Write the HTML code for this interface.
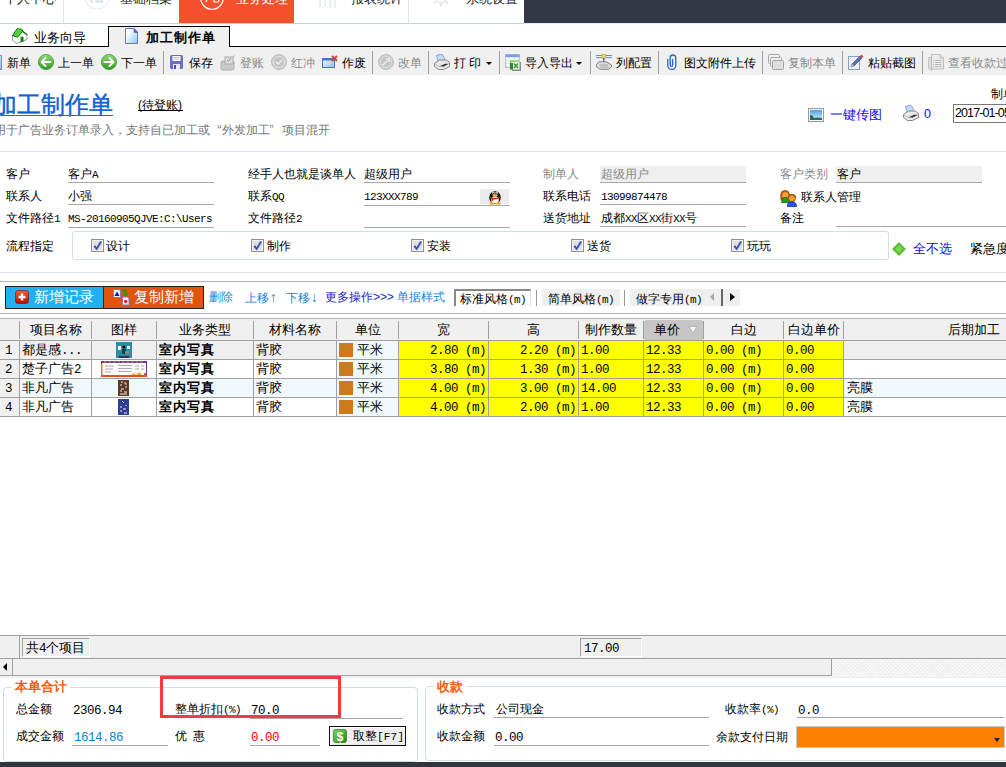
<!DOCTYPE html>
<html><head><meta charset="utf-8">
<style>
*{margin:0;padding:0;box-sizing:border-box}
html,body{width:1006px;height:767px;overflow:hidden;background:#fff;font-family:"Liberation Sans",sans-serif;font-size:12px;color:#000}
.a{position:absolute;white-space:nowrap;line-height:1}
.m{font-family:"Liberation Mono",monospace;font-size:11px!important;letter-spacing:-0.6px}
.hl{position:absolute;height:1px}
.g{font-family:"Liberation Mono",monospace;font-size:12.5px;letter-spacing:-0.5px}
.vl{position:absolute;width:1px}
</style></head><body>
<!-- top nav -->
<div class="a" style="left:0;top:0;width:1006px;height:23px;background:#fff"></div>
<div class="a" style="left:179px;top:0;width:115px;height:23px;background:#f5502c"></div>
<div class="a" style="left:524px;top:0;width:482px;height:23px;background:#343a45"></div>
<div class="hl" style="left:0;top:23px;width:524px;background:#c3d2dc"></div><div class="hl" style="left:524px;top:23px;width:482px;background:#e2ecf3"></div>
<div class="vl" style="left:63px;top:0;height:23px;background:#e3e3e3"></div>
<div class="vl" style="left:408px;top:0;height:23px;background:#e3e3e3"></div>
<div class="a" style="left:4px;top:-7px;font-size:12.5px;color:#222">个人中心</div>
<svg class="a" style="left:84px;top:-16px" width="26" height="26" viewBox="0 0 26 26"><circle cx="13" cy="13" r="12" fill="none" stroke="#ebebeb" stroke-width="1"/><rect x="6" y="16" width="3" height="3" fill="#e3e8ec"/><rect x="11" y="16" width="8" height="3" fill="#e3e8ec"/></svg>
<div class="a" style="left:120px;top:-7px;font-size:12.5px;color:#222">基础档案</div>
<svg class="a" style="left:199px;top:-15px" width="26" height="26" viewBox="0 0 26 26"><circle cx="13" cy="13" r="11.3" fill="none" stroke="#fff" stroke-width="1.3"/><path d="M7 17 l2 -5 M15 12 v5 h3 a2 2 0 0 0 0 -4" fill="none" stroke="#fff" stroke-width="1.2"/></svg>
<div class="a" style="left:236px;top:-7px;font-size:12.5px;color:#fff">业务处理</div>
<svg class="a" style="left:316px;top:-8px" width="22" height="17" viewBox="0 0 22 17"><path d="M4 0v15M9 0v15M14 0v15M19 0v15" stroke="#e8ecef" stroke-width="1.6"/><path d="M1 15.5h20" stroke="#eef0f2" stroke-width="1" stroke-dasharray="1 1"/></svg>
<div class="a" style="left:351px;top:-7px;font-size:12.5px;color:#222">报表统计</div>
<svg class="a" style="left:433px;top:-9px" width="16" height="16" viewBox="0 0 16 16"><circle cx="8" cy="7" r="5" fill="none" stroke="#e6eaec" stroke-width="2"/><path d="M8 12v3.5M3 11l-2 2M13 11l2 2" stroke="#e6eaec" stroke-width="2"/></svg>
<div class="a" style="left:466px;top:-7px;font-size:12.5px;color:#222">系统设置</div>

<!-- tab row -->
<div class="hl" style="left:0;top:46px;width:1006px;background:#000"></div>
<div class="a" style="left:108px;top:26px;width:122px;height:21px;border:1px solid #000;border-bottom:none;background:#f0f0f0"></div>
<div class="a" style="left:34px;top:31px;font-size:13px">业务向导</div>
<div class="a" style="left:146px;top:31px;font-size:13px;font-weight:bold;letter-spacing:1px">加工制作单</div>

<!-- toolbar -->
<div class="a" style="left:0;top:47px;width:1006px;height:28px;background:#f0f0f0"></div>
<div class="a" style="left:7px;top:57px">新单</div>
<div class="a" style="left:58px;top:57px">上一单</div>
<div class="a" style="left:121px;top:57px">下一单</div>
<div class="a" style="left:189px;top:57px">保存</div>
<div class="a" style="left:240px;top:57px;color:#888">登账</div>
<div class="a" style="left:291px;top:57px;color:#888">红冲</div>
<div class="a" style="left:342px;top:57px">作废</div>
<div class="a" style="left:398px;top:57px;color:#888">改单</div>
<div class="a" style="left:454px;top:57px">打 印</div>
<div class="a" style="left:525px;top:57px">导入导出</div>
<div class="a" style="left:616px;top:57px">列配置</div>
<div class="a" style="left:684px;top:57px">图文附件上传</div>
<div class="a" style="left:788px;top:57px;color:#888">复制本单</div>
<div class="a" style="left:868px;top:57px">粘贴截图</div>
<div class="a" style="left:948px;top:57px;color:#888">查看收款过</div>
<div class="vl" style="left:163px;top:51px;height:23px;background:#a0a0a0"></div>
<div class="vl" style="left:372px;top:51px;height:23px;background:#a0a0a0"></div>
<div class="vl" style="left:428px;top:51px;height:23px;background:#a0a0a0"></div>
<div class="vl" style="left:499px;top:51px;height:23px;background:#a0a0a0"></div>
<div class="vl" style="left:590px;top:51px;height:23px;background:#a0a0a0"></div>
<div class="vl" style="left:658px;top:51px;height:23px;background:#a0a0a0"></div>
<div class="vl" style="left:762px;top:51px;height:23px;background:#a0a0a0"></div>
<div class="vl" style="left:842px;top:51px;height:23px;background:#a0a0a0"></div>
<div class="vl" style="left:922px;top:51px;height:23px;background:#a0a0a0"></div>

<!-- title -->
<div class="a" style="left:-7px;top:93px;font-size:24px;color:#0f62d2;-webkit-text-stroke:0.4px #0f62d2">加工制作单</div><div class="hl" style="left:0;top:115px;width:113px;background:#1a6fd6"></div>
<div class="a" style="left:138px;top:99px;font-size:12px">(待登账)</div><div class="hl" style="left:138px;top:110px;width:45px;background:#000"></div>
<div class="a" style="left:-6.5px;top:124px;font-size:12px;color:#777">用于广告业务订单录入，支持自已加工或<span style="display:inline-block;width:12px;text-align:right">“</span>外发加工<span style="display:inline-block;width:12px">”</span>项目混开</div>
<div class="a" style="left:830px;top:108px;font-size:13px;color:#0b0bf5">一键传图</div>
<div class="a" style="left:924px;top:108px;font-size:12.5px;color:#0b0bf5">0</div>
<div class="a" style="left:991px;top:88px;font-size:12px">制单</div>
<div class="a" style="left:953px;top:104px;width:60px;height:19px;border:1px solid #7a7a7a;background:#fff"></div>
<div class="a" style="left:955px;top:107px;font-size:12.5px;letter-spacing:-0.9px">2017-01-05</div>


<!-- form -->
<div class="hl" style="left:0;top:151px;width:1006px;background:#dbe3ea"></div>
<div class="a" style="left:6px;top:168px">客户</div>
<div class="a" style="left:68px;top:168px">客户<span class="m" style="font-size:10px">A</span></div>
<div class="hl" style="left:68px;top:182px;width:146px;background:#a8a8a8"></div>
<div class="a" style="left:6px;top:190px">联系人</div>
<div class="a" style="left:68px;top:190px">小强</div>
<div class="hl" style="left:68px;top:204px;width:146px;background:#a8a8a8"></div>
<div class="a" style="left:6px;top:212px">文件路径<span class="m" style="font-size:10px">1</span></div>
<div class="a m" style="left:68px;top:214px;font-size:10px">MS-20160905QJVE:C:\Users</div>
<div class="hl" style="left:68px;top:227px;width:146px;background:#a8a8a8"></div>

<div class="a" style="left:248px;top:168px">经手人也就是谈单人</div>
<div class="a" style="left:364px;top:168px">超级用户</div>
<div class="hl" style="left:364px;top:182px;width:146px;background:#a8a8a8"></div>
<div class="a" style="left:248px;top:190px">联系<span class="m" style="font-size:10px">QQ</span></div>
<div class="a m" style="left:364px;top:192px;font-size:10px">123XXX789</div>
<div class="a" style="left:480px;top:189px;width:29px;height:15px;background:#ececec"></div>
<div class="hl" style="left:364px;top:205px;width:146px;background:#a8a8a8"></div>
<div class="a" style="left:248px;top:212px">文件路径<span class="m" style="font-size:10px">2</span></div>
<div class="hl" style="left:364px;top:227px;width:146px;background:#a8a8a8"></div>

<div class="a" style="left:543px;top:168px;color:#888">制单人</div>
<div class="a" style="left:600px;top:166px;width:146px;height:16px;background:#efefef"></div>
<div class="a" style="left:601px;top:168px;color:#888">超级用户</div>
<div class="hl" style="left:600px;top:182px;width:146px;background:#a8a8a8"></div>
<div class="a" style="left:543px;top:190px">联系电话</div>
<div class="a m" style="left:601px;top:192px;font-size:10px">13099874478</div>
<div class="hl" style="left:600px;top:204px;width:146px;background:#a8a8a8"></div>
<div class="a" style="left:543px;top:212px">送货地址</div>
<div class="a" style="left:601px;top:212px">成都<span class="m" style="font-size:10px">XX</span>区<span class="m" style="font-size:10px">XX</span>街<span class="m" style="font-size:10px">XX</span>号</div>
<div class="hl" style="left:600px;top:226px;width:146px;background:#a8a8a8"></div>

<div class="a" style="left:780px;top:168px;color:#888">客户类别</div>
<div class="a" style="left:836px;top:166px;width:146px;height:16px;background:#efefef"></div>
<div class="a" style="left:837px;top:168px">客户</div>
<div class="hl" style="left:836px;top:182px;width:146px;background:#a8a8a8"></div>
<div class="a" style="left:801px;top:191px">联系人管理</div>
<div class="a" style="left:780px;top:212px">备注</div>
<div class="hl" style="left:836px;top:226px;width:170px;background:#a8a8a8"></div>

<!-- flow -->
<div class="a" style="left:6px;top:240px">流程指定</div>
<div class="a" style="left:72px;top:231px;width:817px;height:29px;border:1px solid #d4dee6;border-radius:3px"></div>
<div class="a" style="left:106px;top:240px">设计</div>
<div class="a" style="left:267px;top:240px">制作</div>
<div class="a" style="left:427px;top:240px">安装</div>
<div class="a" style="left:587px;top:240px">送货</div>
<div class="a" style="left:747px;top:240px">玩玩</div>
<div class="a" style="left:913px;top:242px;font-size:13px;color:#0c0cff">全不选</div>
<div class="a" style="left:970px;top:242px;font-size:13px">紧急度</div>
<div class="hl" style="left:0;top:272px;width:1006px;background:#dbe3ea"></div>

<!-- buttons row -->
<div class="hl" style="left:0;top:281px;width:1006px;background:#b4b4b4"></div>
<div class="a" style="left:5px;top:286px;width:199px;height:23px;border:1px solid #222;background:#e0540e"></div>
<div class="a" style="left:6px;top:287px;width:97px;height:21px;background:#1fb1f2"></div>
<div class="a" style="left:103px;top:287px;width:1px;height:21px;background:#222"></div>
<div class="a" style="left:34px;top:289px;font-size:15px;color:#fff">新增记录</div>
<div class="a" style="left:134px;top:289px;font-size:15px;color:#fff">复制新增</div>
<div class="a" style="left:209px;top:291px;font-size:12px;color:#1a84d6">删除</div>
<div class="a" style="left:245px;top:291px;font-size:12px;color:#1a84d6">上移<span style="font-size:14px;font-family:'Liberation Mono'">↑</span></div>
<div class="a" style="left:286px;top:291px;font-size:12px;color:#1a84d6">下移<span style="font-size:14px;font-family:'Liberation Mono'">↓</span></div>
<div class="a" style="left:325px;top:291px;font-size:12px;color:#2323c8">更多操作<span style="font-family:'Liberation Mono';font-size:12px;letter-spacing:-0.3px">&gt;&gt;&gt;</span></div>
<div class="a" style="left:397px;top:291px;font-size:12px;color:#1a84d6">单据样式</div>
<div class="a" style="left:454px;top:289px;width:77px;height:17px;background:#fff;border-left:2px solid #888;border-top:2px solid #888;border-right:1px solid #ddd"></div>
<div class="a" style="left:460px;top:293px">标准风格<span class="m" style="font-size:10px">(m)</span></div>
<div class="vl" style="left:536px;top:290px;height:16px;background:#999"></div>
<div class="a" style="left:542px;top:289px;width:78px;height:17px;background:#efefef"></div>
<div class="a" style="left:548px;top:293px">简单风格<span class="m" style="font-size:10px">(m)</span></div>
<div class="vl" style="left:624px;top:290px;height:16px;background:#999"></div>
<div class="a" style="left:630px;top:289px;width:110px;height:17px;background:#efefef"></div>
<div class="a" style="left:636px;top:293px">做字专用<span class="m" style="font-size:10px">(m)</span></div>
<div class="hl" style="left:0;top:313px;width:1006px;background:#b4b4b4"></div>
<div class="hl" style="left:0;top:318px;width:1006px;background:#b4b4b4"></div>
<div class="a" style="left:0;top:319px;width:1006px;height:21px;background:#f0f0f0"></div>
<div class="a" style="left:644px;top:320px;width:59px;height:20px;background:#c6c6c6;border-radius:2px 2px 0 0"></div>
<div class="vl" style="left:19px;top:321px;height:18px;background:#a0a0a0"></div>
<div class="vl" style="left:91px;top:321px;height:18px;background:#a0a0a0"></div>
<div class="vl" style="left:156px;top:321px;height:18px;background:#a0a0a0"></div>
<div class="vl" style="left:253px;top:321px;height:18px;background:#a0a0a0"></div>
<div class="vl" style="left:336px;top:321px;height:18px;background:#a0a0a0"></div>
<div class="vl" style="left:398px;top:321px;height:18px;background:#a0a0a0"></div>
<div class="vl" style="left:488px;top:321px;height:18px;background:#a0a0a0"></div>
<div class="vl" style="left:578px;top:321px;height:18px;background:#a0a0a0"></div>
<div class="vl" style="left:643px;top:321px;height:18px;background:#a0a0a0"></div>
<div class="vl" style="left:703px;top:321px;height:18px;background:#a0a0a0"></div>
<div class="vl" style="left:783px;top:321px;height:18px;background:#a0a0a0"></div>
<div class="vl" style="left:843px;top:321px;height:18px;background:#a0a0a0"></div>
<div class="a" style="left:20px;top:323px;width:71px;text-align:center;font-size:13px">项目名称</div>
<div class="a" style="left:92px;top:323px;width:64px;text-align:center;font-size:13px">图样</div>
<div class="a" style="left:157px;top:323px;width:96px;text-align:center;font-size:13px">业务类型</div>
<div class="a" style="left:254px;top:323px;width:82px;text-align:center;font-size:13px">材料名称</div>
<div class="a" style="left:337px;top:323px;width:61px;text-align:center;font-size:13px">单位</div>
<div class="a" style="left:399px;top:323px;width:89px;text-align:center;font-size:13px">宽</div>
<div class="a" style="left:489px;top:323px;width:89px;text-align:center;font-size:13px">高</div>
<div class="a" style="left:579px;top:323px;width:64px;text-align:center;font-size:13px">制作数量</div>
<div class="a" style="left:654px;top:323px;font-size:13px">单价</div>
<svg class="a" style="left:688px;top:325px" width="10" height="9" viewBox="0 0 10 9"><path d="M1 1.5 H9 L5 8Z" fill="#f4f4f4" stroke="#a8a8a8" stroke-width="0.8"/></svg>
<div class="a" style="left:704px;top:323px;width:79px;text-align:center;font-size:13px">白边</div>
<div class="a" style="left:784px;top:323px;width:59px;text-align:center;font-size:13px">白边单价</div>
<div class="a" style="left:943px;top:323px;width:57px;text-align:right;font-size:13px">后期加工</div>
<div class="hl" style="left:0;top:340px;width:1006px;background:#a0a0a0"></div>
<div class="a" style="left:0;top:341px;width:19px;height:18px;background:#f0f0f0"></div>
<div class="a" style="left:20px;top:341px;width:378px;height:18px;background:#efefef"></div>
<div class="a" style="left:337px;top:341px;width:61px;height:18px;background:#f0f8fc"></div>
<div class="a" style="left:399px;top:341px;width:444px;height:18px;background:#ffff00"></div>
<div class="a" style="left:844px;top:341px;width:162px;height:18px;background:#efefef"></div>
<div class="a g" style="left:5px;top:345px">1</div>
<div class="a" style="left:22px;top:343px;font-size:13px">都是感<span class="g">...</span></div>
<div class="a" style="left:159px;top:343px;font-size:13px;font-weight:bold;letter-spacing:1px">室内写真</div>
<div class="a" style="left:256px;top:343px;font-size:13px">背胶</div>
<div class="a" style="left:339px;top:343px;width:14px;height:14px;background:#cd7a1f"></div>
<div class="a" style="left:357px;top:343px;font-size:13px">平米</div>
<div class="a g" style="left:399px;top:345px;width:87px;text-align:right">2.80 (m)</div>
<div class="a g" style="left:489px;top:345px;width:87px;text-align:right">2.20 (m)</div>
<div class="a g" style="left:581px;top:345px">1.00</div>
<div class="a g" style="left:646px;top:345px">12.33</div>
<div class="a g" style="left:706px;top:345px">0.00 (m)</div>
<div class="a g" style="left:786px;top:345px">0.00</div>
<div class="hl" style="left:0;top:359px;width:1006px;background:#a0a0a0"></div>
<div class="a" style="left:0;top:360px;width:19px;height:18px;background:#f0f0f0"></div>
<div class="a" style="left:20px;top:360px;width:378px;height:18px;background:#fff"></div>
<div class="a" style="left:337px;top:360px;width:61px;height:18px;background:#f0f8fc"></div>
<div class="a" style="left:399px;top:360px;width:444px;height:18px;background:#ffff00"></div>
<div class="a" style="left:844px;top:360px;width:162px;height:18px;background:#fff"></div>
<div class="a g" style="left:5px;top:364px">2</div>
<div class="a" style="left:22px;top:362px;font-size:13px">楚子广告<span class="g">2</span></div>
<div class="a" style="left:159px;top:362px;font-size:13px;font-weight:bold;letter-spacing:1px">室内写真</div>
<div class="a" style="left:256px;top:362px;font-size:13px">背胶</div>
<div class="a" style="left:339px;top:362px;width:14px;height:14px;background:#cd7a1f"></div>
<div class="a" style="left:357px;top:362px;font-size:13px">平米</div>
<div class="a g" style="left:399px;top:364px;width:87px;text-align:right">3.80 (m)</div>
<div class="a g" style="left:489px;top:364px;width:87px;text-align:right">1.30 (m)</div>
<div class="a g" style="left:581px;top:364px">1.00</div>
<div class="a g" style="left:646px;top:364px">12.33</div>
<div class="a g" style="left:706px;top:364px">0.00 (m)</div>
<div class="a g" style="left:786px;top:364px">0.00</div>
<div class="hl" style="left:0;top:378px;width:1006px;background:#a0a0a0"></div>
<div class="a" style="left:0;top:379px;width:19px;height:18px;background:#f0f0f0"></div>
<div class="a" style="left:20px;top:379px;width:378px;height:18px;background:#f0f8fc"></div>
<div class="a" style="left:337px;top:379px;width:61px;height:18px;background:#f0f8fc"></div>
<div class="a" style="left:399px;top:379px;width:444px;height:18px;background:#ffff00"></div>
<div class="a" style="left:844px;top:379px;width:162px;height:18px;background:#f0f8fc"></div>
<div class="a g" style="left:5px;top:383px">3</div>
<div class="a" style="left:22px;top:381px;font-size:13px">非凡广告</div>
<div class="a" style="left:159px;top:381px;font-size:13px;font-weight:bold;letter-spacing:1px">室内写真</div>
<div class="a" style="left:256px;top:381px;font-size:13px">背胶</div>
<div class="a" style="left:339px;top:381px;width:14px;height:14px;background:#cd7a1f"></div>
<div class="a" style="left:357px;top:381px;font-size:13px">平米</div>
<div class="a g" style="left:399px;top:383px;width:87px;text-align:right">4.00 (m)</div>
<div class="a g" style="left:489px;top:383px;width:87px;text-align:right">3.00 (m)</div>
<div class="a g" style="left:581px;top:383px">14.00</div>
<div class="a g" style="left:646px;top:383px">12.33</div>
<div class="a g" style="left:706px;top:383px">0.00 (m)</div>
<div class="a g" style="left:786px;top:383px">0.00</div>
<div class="a" style="left:847px;top:381px;font-size:13px">亮膜</div>
<div class="hl" style="left:0;top:397px;width:1006px;background:#a0a0a0"></div>
<div class="a" style="left:0;top:398px;width:19px;height:18px;background:#f0f0f0"></div>
<div class="a" style="left:20px;top:398px;width:378px;height:18px;background:#fff"></div>
<div class="a" style="left:337px;top:398px;width:61px;height:18px;background:#f0f8fc"></div>
<div class="a" style="left:399px;top:398px;width:444px;height:18px;background:#ffff00"></div>
<div class="a" style="left:844px;top:398px;width:162px;height:18px;background:#fff"></div>
<div class="a g" style="left:5px;top:402px">4</div>
<div class="a" style="left:22px;top:400px;font-size:13px">非凡广告</div>
<div class="a" style="left:159px;top:400px;font-size:13px;font-weight:bold;letter-spacing:1px">室内写真</div>
<div class="a" style="left:256px;top:400px;font-size:13px">背胶</div>
<div class="a" style="left:339px;top:400px;width:14px;height:14px;background:#cd7a1f"></div>
<div class="a" style="left:357px;top:400px;font-size:13px">平米</div>
<div class="a g" style="left:399px;top:402px;width:87px;text-align:right">4.00 (m)</div>
<div class="a g" style="left:489px;top:402px;width:87px;text-align:right">2.00 (m)</div>
<div class="a g" style="left:581px;top:402px">1.00</div>
<div class="a g" style="left:646px;top:402px">12.33</div>
<div class="a g" style="left:706px;top:402px">0.00 (m)</div>
<div class="a g" style="left:786px;top:402px">0.00</div>
<div class="a" style="left:847px;top:400px;font-size:13px">亮膜</div>
<div class="hl" style="left:0;top:416px;width:1006px;background:#a0a0a0"></div>
<div class="vl" style="left:19px;top:341px;height:75px;background:#a0a0a0"></div>
<div class="vl" style="left:91px;top:341px;height:75px;background:#a0a0a0"></div>
<div class="vl" style="left:156px;top:341px;height:75px;background:#a0a0a0"></div>
<div class="vl" style="left:253px;top:341px;height:75px;background:#a0a0a0"></div>
<div class="vl" style="left:336px;top:341px;height:75px;background:#a0a0a0"></div>
<div class="vl" style="left:398px;top:341px;height:75px;background:#a0a0a0"></div>
<div class="vl" style="left:488px;top:341px;height:75px;background:#a0a0a0"></div>
<div class="vl" style="left:578px;top:341px;height:75px;background:#a0a0a0"></div>
<div class="vl" style="left:643px;top:341px;height:75px;background:#a0a0a0"></div>
<div class="vl" style="left:703px;top:341px;height:75px;background:#a0a0a0"></div>
<div class="vl" style="left:783px;top:341px;height:75px;background:#a0a0a0"></div>
<div class="vl" style="left:843px;top:341px;height:75px;background:#a0a0a0"></div>
<div class="hl" style="left:0;top:635px;width:1006px;background:#a0a0a0"></div>
<div class="a" style="left:0;top:636px;width:1006px;height:23px;background:#f0f0f0"></div>
<div class="vl" style="left:19px;top:636px;height:23px;background:#a0a0a0"></div>
<div class="a" style="left:22px;top:638px;width:68px;height:19px;border:1px solid #a0a0a0;border-right-color:#fff;border-bottom-color:#fff;background:#f0f0f0"></div>
<div class="a" style="left:26px;top:641px;font-size:13px">共<span class="g">4</span>个项目</div>
<div class="a" style="left:580px;top:638px;width:62px;height:19px;border:1px solid #a0a0a0;border-right-color:#fff;border-bottom-color:#fff;background:#f0f0f0"></div>
<div class="a g" style="left:584px;top:643px">17.00</div>
<div class="hl" style="left:0;top:658px;width:1006px;background:#a0a0a0"></div>
<div class="a" style="left:0;top:659px;width:1006px;height:18px;background:#f8f8f8;background-image:repeating-linear-gradient(45deg,#f0f0f0 0 1px,transparent 1px 3px),repeating-linear-gradient(-45deg,#f0f0f0 0 1px,transparent 1px 3px)"></div>
<div class="a" style="left:12px;top:659px;width:820px;height:16px;background:#f0f0f0;border-right:1px solid #a0a0a0"></div>
<div class="a" style="left:0;top:659px;width:12px;height:16px;background:#f0f0f0"></div><div class="vl" style="left:12px;top:659px;height:16px;background:#a0a0a0"></div><div class="hl" style="left:0;top:677px;width:1006px;background:#ececec"></div>
<div class="a" style="left:3px;top:663px;width:0;height:0;border-top:4px solid transparent;border-bottom:4px solid transparent;border-right:4px solid #000"></div>
<div class="hl" style="left:0;top:675px;width:832px;background:#a0a0a0"></div>

<!-- bottom panel -->
<div class="a" style="left:3px;top:687px;width:415px;height:75px;border:1px solid #d3dde5;border-radius:4px"></div>
<div class="a" style="left:12px;top:681px;width:58px;height:12px;background:#fff"></div>
<div class="a" style="left:15px;top:680.5px;font-size:12.8px;font-weight:bold;color:#fa5a0c">本单合计</div>
<div class="a" style="left:16px;top:703px">总金额</div>
<div class="a g" style="left:73px;top:705px">2306.94</div>
<div class="a" style="left:16px;top:730px">成交金额</div>
<div class="a g" style="left:74px;top:732px;color:#1580d0">1614.86</div>
<div class="hl" style="left:72px;top:745px;width:96px;background:#a8a8a8"></div>
<div class="a" style="left:175px;top:703px">整单折扣<span class="m" style="font-size:10px">(%)</span></div>
<div class="a g" style="left:251px;top:705px">70.0</div>
<div class="hl" style="left:250px;top:718px;width:153px;background:#a8a8a8"></div>
<div class="a" style="left:175px;top:730px">优<span style="display:inline-block;width:6px"></span>惠</div>
<div class="a g" style="left:251px;top:732px;color:#f00">0.00</div>
<div class="hl" style="left:250px;top:745px;width:70px;background:#a8a8a8"></div>
<div class="a" style="left:329px;top:726px;width:77px;height:20px;border:1px solid #111;background:#efefef;box-shadow:inset 1px 1px 0 #fff"></div>
<div class="a" style="left:353px;top:730px">取整<span style="font-family:'Liberation Mono';font-size:11px;letter-spacing:0.2px">[F7]</span></div>

<div class="a" style="left:425px;top:686px;width:600px;height:75px;border:1px solid #d3dde5;border-radius:4px"></div>
<div class="a" style="left:434px;top:681px;width:32px;height:12px;background:#fff"></div>
<div class="a" style="left:437px;top:680.5px;font-size:12.8px;font-weight:bold;color:#fa5a0c">收款</div>
<div class="a" style="left:437px;top:703px">收款方式</div>
<div class="a" style="left:496px;top:703px">公司现金</div>
<div class="hl" style="left:494px;top:717px;width:215px;background:#a8a8a8"></div>
<div class="a" style="left:437px;top:730px">收款金额</div>
<div class="a g" style="left:495px;top:732px">0.00</div>
<div class="hl" style="left:494px;top:745px;width:215px;background:#a8a8a8"></div>
<div class="a" style="left:725px;top:703px">收款率<span class="m" style="font-size:10px">(%)</span></div>
<div class="a g" style="left:798px;top:705px">0.0</div>
<div class="hl" style="left:797px;top:717px;width:207px;background:#a8a8a8"></div>
<div class="a" style="left:716px;top:731px">余款支付日期</div>
<div class="a" style="left:796px;top:726px;width:209px;height:22px;border:1px solid #c8c8c8;background:#ff8000"></div>
<div class="a" style="left:994px;top:738px;width:0;height:0;border-left:3px solid transparent;border-right:3px solid transparent;border-top:4px solid #222"></div>

<div class="a" style="left:160px;top:676px;width:181px;height:42px;border:3px solid #f23b3d"></div>
<div class="a" style="left:0;top:762px;width:1006px;height:5px;background:#2f3640"></div>
<svg width="0" height="0" style="position:absolute"><defs>
<linearGradient id="gG" x1="0" y1="0" x2="0" y2="1"><stop offset="0" stop-color="#8fdc6a"/><stop offset="1" stop-color="#2f9a2a"/></linearGradient>
<linearGradient id="gDoc" x1="0" y1="0" x2="1" y2="1"><stop offset="0" stop-color="#ffffff"/><stop offset="1" stop-color="#8ab8ea"/></linearGradient>
<linearGradient id="gGray" x1="0" y1="0" x2="0" y2="1"><stop offset="0" stop-color="#e4e4e4"/><stop offset="1" stop-color="#b4b4b4"/></linearGradient>
<linearGradient id="gRed" x1="0" y1="0" x2="0" y2="1"><stop offset="0" stop-color="#ff5a3a"/><stop offset="1" stop-color="#b80e00"/></linearGradient>
</defs></svg>
<svg class="a" style="left:-11px;top:55px" width="14" height="15" viewBox="0 0 14 15"><rect x="0.5" y="0.5" width="12" height="14" fill="url(#gDoc)" stroke="#7a8fc8"/></svg>
<svg class="a" style="left:38px;top:54px" width="16" height="16" viewBox="0 0 16 16"><circle cx="8" cy="8" r="7.6" fill="url(#gG)" stroke="#3c9a34" stroke-width="0.8"/><path d="M3.5 8 L7.5 4 M3.5 8 L7.5 12 M3.5 8 H12.5" stroke="#fff" stroke-width="2" fill="none" stroke-linecap="round"/></svg>
<svg class="a" style="left:101px;top:54px" width="16" height="16" viewBox="0 0 16 16"><circle cx="8" cy="8" r="7.6" fill="url(#gG)" stroke="#3c9a34" stroke-width="0.8"/><path d="M12.5 8 L8.5 4 M12.5 8 L8.5 12 M12.5 8 H3.5" stroke="#fff" stroke-width="2" fill="none" stroke-linecap="round"/></svg>
<svg class="a" style="left:170px;top:55px" width="13" height="14" viewBox="0 0 13 14"><rect x="0" y="0" width="13" height="14" rx="1.5" fill="#6b6fc4"/><rect x="2.5" y="1" width="8" height="5" fill="#fff"/><path d="M3.5 2.5h6M3.5 4h6" stroke="#bbb" stroke-width="0.8"/><rect x="3" y="9" width="7" height="5" fill="#e8e8f0"/><rect x="4" y="10" width="2" height="4" fill="#4a4fa8"/></svg>
<svg class="a" style="left:220px;top:55px" width="16" height="16" viewBox="0 0 16 16"><rect x="1" y="6" width="13" height="9" rx="1.5" fill="#c8c8c8" stroke="#b0b0b0"/><rect x="5" y="2" width="8" height="7" fill="#ddd" stroke="#aaa"/><path d="M7 5l1.5 1.5L11 3" stroke="#999" fill="none"/><path d="M13 2 l2 -1.5" stroke="#aaa"/></svg>
<svg class="a" style="left:271px;top:54px" width="16" height="16" viewBox="0 0 16 16"><circle cx="8" cy="8" r="7.5" fill="#cfcfcf" stroke="#bdbdbd"/><circle cx="8" cy="8" r="5.5" fill="#c4c4c4" stroke="#e6e6e6" stroke-width="0.8"/><path d="M5 8l2 2 4-4" stroke="#eee" stroke-width="1.4" fill="none"/></svg>
<svg class="a" style="left:322px;top:54px" width="17" height="16" viewBox="0 0 17 16"><rect x="0.5" y="4.5" width="12" height="9" fill="url(#gDoc)" stroke="#3a78d0"/><rect x="0.5" y="4.5" width="12" height="2" fill="#3a78d0"/><path d="M10 2l5 5M15 2l-5 5" stroke="#e04030" stroke-width="2"/></svg>
<svg class="a" style="left:378px;top:54px" width="16" height="16" viewBox="0 0 16 16"><circle cx="8" cy="8" r="7.5" fill="#cfcfcf" stroke="#bdbdbd"/><circle cx="8" cy="8" r="5.5" fill="#c4c4c4" stroke="#e6e6e6" stroke-width="0.8"/><path d="M5 11l4-4M8 5l3 0 0 3" stroke="#eee" stroke-width="1.5" fill="none"/></svg>
<svg class="a" style="left:434px;top:54px" width="16" height="16" viewBox="0 0 16 16"><path d="M2.5 1.5 L5 0.7 H8.5 L10.5 4.5 L9.5 8 H4.5 Z" fill="#bfe0fb" stroke="#8a94dc" stroke-width="0.9"/><path d="M0.5 9.5 L5.5 6 H12.5 L15.5 8.5 V12.5 L9.5 15.5 H4.5 L0.5 12.5 Z" fill="#e8e8e8" stroke="#7a7a7a" stroke-width="0.9"/><path d="M5 12.5 L11 9.8 H15 L9.5 12.8 Z" fill="#3a3a3a"/><path d="M1 10 L5 12.5 H9" fill="none" stroke="#aaa" stroke-width="0.7"/></svg>
<div class="a" style="left:486px;top:62px;border-left:3px solid transparent;border-right:3px solid transparent;border-top:3px solid #000"></div>
<div class="a" style="left:576px;top:62px;border-left:3px solid transparent;border-right:3px solid transparent;border-top:3px solid #000"></div>
<svg class="a" style="left:505px;top:54px" width="17" height="17" viewBox="0 0 17 17"><rect x="0.5" y="0.5" width="14" height="13" fill="#d8e2f4" stroke="#a8b8dc" stroke-width="0.8"/><rect x="0.5" y="0.5" width="14" height="2.5" fill="#7b9de8"/><path d="M1.5 4h3v2h-3zM5.5 4h3v2h-3zM9.5 4h3v2h-3zM1.5 7h3v2h-3zM1.5 10h3v2h-3z" fill="#fff"/><rect x="7" y="8" width="9" height="9" fill="#8a8a8a"/><rect x="5" y="6" width="9.5" height="9.5" fill="#eefae4"/><path d="M5 6.5 h9.5 v1.2 h-8.3 v7.8 h-1.2z" fill="#5ac840"/><rect x="5" y="9" width="3" height="6.5" fill="#2a8a2a"/><path d="M9 9.5 l4 4.5 M13 9.5 l-4 4.5" stroke="#3a9a3a" stroke-width="1.6"/></svg>
<svg class="a" style="left:596px;top:54px" width="16" height="16" viewBox="0 0 16 16"><path d="M0 1.5h16M0 3.7h16" stroke="#5a8ee6" stroke-width="1"/><rect x="6" y="0.5" width="3.6" height="3.6" fill="#f8d84a" stroke="#c89a20" stroke-width="0.6"/><path d="M7.8 4v4" stroke="#3a6ad0" stroke-width="1.4"/><path d="M0.5 10.5 L3 7.8 H10.5 L15.5 11 V12.8 L12.5 15.3 H4 L0.5 12.8Z" fill="#dcdcdc" stroke="#6a6a6a" stroke-width="0.8"/><path d="M3.5 11 H12 M4.5 13 H12.5" stroke="#999" stroke-width="0.8"/></svg>
<svg class="a" style="left:666px;top:54px" width="12" height="16" viewBox="0 0 12 16"><path d="M1.8 5 V11.5 a4 4 0 0 0 8 0 V3.8 a2.8 2.8 0 0 0 -5.6 0 V11 a1.2 1.2 0 0 0 2.4 0 V5" fill="none" stroke="#2a62cc" stroke-width="1.3"/></svg>
<svg class="a" style="left:768px;top:54px" width="16" height="16" viewBox="0 0 16 16"><rect x="0.5" y="0.5" width="11" height="9" rx="1" fill="#f0f0f0" stroke="#a8a8a8"/><rect x="2.5" y="3.5" width="11" height="9" rx="1" fill="#efefef" stroke="#a8a8a8"/><rect x="4.5" y="6.5" width="11" height="9" rx="1" fill="#dedede" stroke="#a4a4a4"/></svg>
<svg class="a" style="left:848px;top:54px" width="16" height="16" viewBox="0 0 16 16"><rect x="0.5" y="2.5" width="11" height="13" fill="#eef2fa" stroke="#8ba0c8"/><path d="M3 13 l1 -3 l8 -8 l2 2 l-8 8z" fill="#6070b0" stroke="#404a8a" stroke-width="0.7"/><path d="M12 2 l2 2 l1.5 -1.5 l-2 -2z" fill="#e04a3a"/><path d="M3 13l1-3 2 2z" fill="#e8c890"/></svg>
<svg class="a" style="left:928px;top:54px" width="16" height="17" viewBox="0 0 16 17"><path d="M0.5 3.5 H4 V16 H2 L0.5 14.5Z" fill="#dcdcdc" stroke="#bdbdbd" stroke-width="0.8"/><path d="M3.5 0.5 H12 L15.5 4 V15 H3.5Z" fill="#ebebeb" stroke="#b8b8b8" stroke-width="0.9"/><path d="M12 0.5 V4 H15.5" fill="#d8d8d8" stroke="#b8b8b8" stroke-width="0.7"/><path d="M7 6.5h6.5M7 8.5h6.5M7 10.5h6.5M7 12.5h6.5M5 6.5h1M5 8.5h1M5 10.5h1M5 12.5h1" stroke="#b4b4b4" stroke-width="0.9"/></svg>
<svg class="a" style="left:12px;top:28px" width="16" height="16" viewBox="0 0 16 16"><path d="M0.5 7.5 V12.5 L5 15.5 L15 11.5 V6.5 L10 3 L5 8.5Z" fill="#fbfbfb" stroke="#8a8a8a" stroke-width="0.8"/><path d="M0.5 7.5 L5 0.8 L6.5 0.5 L7.5 1.2 L9 0.8 L10.5 2 V3.5 L5.5 9.2 Z" fill="#52d43a" stroke="#0f7a10" stroke-width="1"/><path d="M10 3 L15.2 6.8" stroke="#0f6a10" stroke-width="1.3"/><path d="M8.5 14.5 V9.5 Q10 7.8 11.5 9 V13.5Z" fill="#0a850a"/></svg>
<svg class="a" style="left:124px;top:28px" width="15" height="16" viewBox="0 0 15 16"><defs><linearGradient id="gD2" x1="0" y1="0" x2="1" y2="1"><stop offset="0.25" stop-color="#ffffff"/><stop offset="1" stop-color="#86c8f0"/></linearGradient></defs><path d="M1.5 0.5 H10 L13.5 4 V15.5 H1.5 Z" fill="url(#gD2)" stroke="#7272bc" stroke-width="1" stroke-linejoin="miter"/><path d="M10 0.5 V4.5 H13.5 Z" fill="#3a74dc" stroke="#4a5ac0" stroke-width="0.6"/></svg>
<svg class="a" style="left:808px;top:108px" width="16" height="14" viewBox="0 0 16 14"><defs><linearGradient id="gSky" x1="0" y1="0" x2="0" y2="1"><stop offset="0" stop-color="#4aa0e0"/><stop offset="1" stop-color="#d8f0ff"/></linearGradient></defs><rect x="0.5" y="0.5" width="15" height="13" fill="#f4f4f4" stroke="#999"/><rect x="2" y="2" width="12" height="10" fill="url(#gSky)"/><path d="M2 7 q3 0 4 3 q3 -1 8 0 v2 h-12z" fill="#2a6a5a"/></svg>
<svg class="a" style="left:903px;top:105px" width="16" height="16" viewBox="0 0 16 16"><path d="M2.5 1.5 L5 0.7 H8.5 L10.5 4.5 L9.5 8 H4.5 Z" fill="#bfe0fb" stroke="#8a94dc" stroke-width="0.9"/><path d="M0.5 9.5 L5.5 6 H12.5 L15.5 8.5 V12.5 L9.5 15.5 H4.5 L0.5 12.5 Z" fill="#e8e8e8" stroke="#7a7a7a" stroke-width="0.9"/><path d="M5 12.5 L11 9.8 H15 L9.5 12.8 Z" fill="#3a3a3a"/><path d="M1 10 L5 12.5 H9" fill="none" stroke="#aaa" stroke-width="0.7"/></svg>
<svg class="a" style="left:488px;top:189px" width="14" height="16" viewBox="0 0 14 16"><ellipse cx="7" cy="8.5" rx="5.8" ry="6.5" fill="#111"/><ellipse cx="7" cy="11" rx="3.8" ry="3.5" fill="#fff"/><ellipse cx="5.4" cy="4" rx="1.2" ry="1.7" fill="#e8e8f0"/><ellipse cx="8.6" cy="4" rx="1.2" ry="1.7" fill="#e8e8f0"/><circle cx="5.7" cy="4.3" r="0.6" fill="#111"/><circle cx="8.3" cy="4.3" r="0.6" fill="#111"/><ellipse cx="7" cy="6.5" rx="2.6" ry="1.2" fill="#f2c020"/><path d="M2 7.5 Q7 10.5 12 7.5 L12 9 Q7 11.5 2 9Z M4 9 L6 9.5 L5 12 L3.5 11.5Z" fill="#e81818"/><ellipse cx="3.8" cy="14.6" rx="2.6" ry="1.2" fill="#f0a818"/><ellipse cx="10.2" cy="14.6" rx="2.6" ry="1.2" fill="#f0a818"/></svg>
<svg class="a" style="left:780px;top:190px" width="17" height="17" viewBox="0 0 17 17"><path d="M0.8 9.5 V4 Q1 0.5 5 0.5 Q9 0.5 9.3 4 V8 Z" fill="#c8701a" stroke="#6a3000" stroke-width="0.7"/><circle cx="5.5" cy="5.2" r="2.9" fill="#f7a030"/><path d="M1.5 12.5 Q1.5 7.5 5.5 7.5 Q9.5 7.5 9.5 12.5 Z" fill="#22a018" stroke="#0a5a0a" stroke-width="0.7"/><circle cx="12" cy="8.2" r="3.5" fill="#f8a030" stroke="#7a4000" stroke-width="0.7"/><path d="M8.5 7.5 Q9 4.5 12 4.6 Q15.5 4.7 15.6 8" fill="none" stroke="#a05010" stroke-width="1.2"/><path d="M7.3 16.5 Q7.3 11.8 12 11.8 Q16.5 11.8 16.5 16.5 Z" fill="#2a58ea" stroke="#0a1a9a" stroke-width="0.7"/></svg>
<svg class="a" style="left:91px;top:239px" width="13" height="13" viewBox="0 0 13 13"><rect x="0.5" y="0.5" width="12" height="12" fill="#f4f4f4" stroke="#8f8f8f"/><rect x="2" y="2" width="9" height="9" fill="#dde0e6"/><path d="M3.3 6.8 L5.6 10 L10.2 2.6" stroke="#3848b0" stroke-width="1.8" fill="none"/></svg>
<svg class="a" style="left:251px;top:239px" width="13" height="13" viewBox="0 0 13 13"><rect x="0.5" y="0.5" width="12" height="12" fill="#f4f4f4" stroke="#8f8f8f"/><rect x="2" y="2" width="9" height="9" fill="#dde0e6"/><path d="M3.3 6.8 L5.6 10 L10.2 2.6" stroke="#3848b0" stroke-width="1.8" fill="none"/></svg>
<svg class="a" style="left:411px;top:239px" width="13" height="13" viewBox="0 0 13 13"><rect x="0.5" y="0.5" width="12" height="12" fill="#f4f4f4" stroke="#8f8f8f"/><rect x="2" y="2" width="9" height="9" fill="#dde0e6"/><path d="M3.3 6.8 L5.6 10 L10.2 2.6" stroke="#3848b0" stroke-width="1.8" fill="none"/></svg>
<svg class="a" style="left:571px;top:239px" width="13" height="13" viewBox="0 0 13 13"><rect x="0.5" y="0.5" width="12" height="12" fill="#f4f4f4" stroke="#8f8f8f"/><rect x="2" y="2" width="9" height="9" fill="#dde0e6"/><path d="M3.3 6.8 L5.6 10 L10.2 2.6" stroke="#3848b0" stroke-width="1.8" fill="none"/></svg>
<svg class="a" style="left:731px;top:239px" width="13" height="13" viewBox="0 0 13 13"><rect x="0.5" y="0.5" width="12" height="12" fill="#f4f4f4" stroke="#8f8f8f"/><rect x="2" y="2" width="9" height="9" fill="#dde0e6"/><path d="M3.3 6.8 L5.6 10 L10.2 2.6" stroke="#3848b0" stroke-width="1.8" fill="none"/></svg>
<svg class="a" style="left:892px;top:242px" width="14" height="14" viewBox="0 0 14 14"><path d="M7 0.5 L13.5 7 L7 13.5 L0.5 7z" fill="#58c030" stroke="#3a9a20" stroke-width="0.6"/><path d="M7 3 L11 7 L7 11 L3 7z" fill="#7ad850"/></svg>
<svg class="a" style="left:15px;top:290px" width="14" height="14" viewBox="0 0 14 14"><rect x="0.5" y="0.5" width="13" height="13" rx="2.5" fill="url(#gRed)" stroke="#8a0a00" stroke-width="0.6"/><path d="M7 3.5v7M3.5 7h7" stroke="#fff" stroke-width="2.4"/></svg>
<svg class="a" style="left:113px;top:289px" width="17" height="17" viewBox="0 0 17 17"><path d="M0.5 0.5 H6 L7.5 2 V8.5 H0.5Z" fill="#eef4fc" stroke="#6a7ac8" stroke-width="0.9"/><path d="M1.5 7 L4 2.5 L6.5 7Z" fill="#0a1a8a"/><path d="M9 1 H11 Q12.7 1 12.7 3 V5" fill="none" stroke="#18a018" stroke-width="2"/><path d="M10 4.5 H15.5 L12.7 8Z" fill="#18a018"/><path d="M9.5 8 H14.5 L16 9.5 V16 H9.5Z" fill="#eef4fc" stroke="#6a7ac8" stroke-width="0.9"/><circle cx="12.7" cy="12.5" r="1.7" fill="#ff1a10"/></svg>
<div class="a" style="left:704px;top:289px;width:17px;height:17px;background:#efefef"></div>
<div class="a" style="left:710px;top:293px;border-top:4.5px solid transparent;border-bottom:4.5px solid transparent;border-right:4px solid #aaa"></div>
<div class="a" style="left:721px;top:289px;width:2px;height:17px;background:#666"></div>
<div class="a" style="left:723px;top:289px;width:16px;height:17px;background:#efefef"></div>
<div class="a" style="left:730px;top:293px;border-top:4.5px solid transparent;border-bottom:4.5px solid transparent;border-left:5px solid #000"></div>
<svg class="a" style="left:116px;top:342px" width="16" height="16" viewBox="0 0 16 16"><rect width="16" height="16" fill="#2a8fa3"/><rect x="2" y="4" width="3" height="4" fill="#eee"/><rect x="11" y="4" width="3" height="3" fill="#eee"/><circle cx="8" cy="5" r="1.6" fill="#111"/><path d="M6 7h4v5h-4z" fill="#1a3a4a"/><rect x="9" y="9" width="4" height="3" fill="#888"/><rect x="3" y="14" width="10" height="2" fill="#335"/></svg>
<svg class="a" style="left:101px;top:361px" width="46" height="16" viewBox="0 0 46 16"><rect width="46" height="16" fill="#6a3aa0"/><rect x="1" y="2" width="44" height="12" fill="#fbfbfb"/><path d="M3 1h40" stroke="#e8c020" stroke-width="0.8" stroke-dasharray="2.5 2"/><path d="M4 5h9M4 8h8M4 11h6M17 4.5h14M17 7.5h14M17 10.5h14M34 5h4M34 8h4M40 5h3M40 8h3" stroke="#8a8a8a" stroke-width="0.7"/><path d="M0 14h46v2H0z" fill="#e8501a"/><path d="M30 14 l3 -2 l2 2 l3 -3 l3 3" fill="#f0a020"/><path d="M0 3 h1.5 v11 h-1.5z" fill="#f07a20"/><circle cx="44" cy="13" r="1" fill="#d02020"/></svg>
<svg class="a" style="left:118px;top:380px" width="11" height="16" viewBox="0 0 11 16"><rect width="11" height="16" fill="#5a3a22"/><path d="M3 2h2M6 3h2v2M2 5h2M7 7h2M3 9h3M2 11h2M6 12h3M2 14h7" stroke="#fff" stroke-width="0.9"/></svg>
<svg class="a" style="left:118px;top:399px" width="11" height="16" viewBox="0 0 11 16"><rect width="11" height="16" fill="#2e3f92"/><path d="M4 2l2 2M3 7v2M8 6v1M5 10h3M2 12h2M6 14h3" stroke="#fff" stroke-width="0.9"/></svg>
<svg class="a" style="left:333px;top:729px" width="14" height="14" viewBox="0 0 14 14"><defs><linearGradient id="gDol" x1="0" y1="0" x2="1" y2="1"><stop offset="0" stop-color="#7ad85a"/><stop offset="1" stop-color="#1a8a1a"/></linearGradient></defs><rect x="0.5" y="0.5" width="13" height="13" rx="2" fill="url(#gDol)" stroke="#1a6a1a" stroke-width="0.6"/><text x="7" y="12" font-size="12.5" font-family="Liberation Sans" font-weight="bold" fill="#fff" text-anchor="middle">$</text></svg>
</body></html>
